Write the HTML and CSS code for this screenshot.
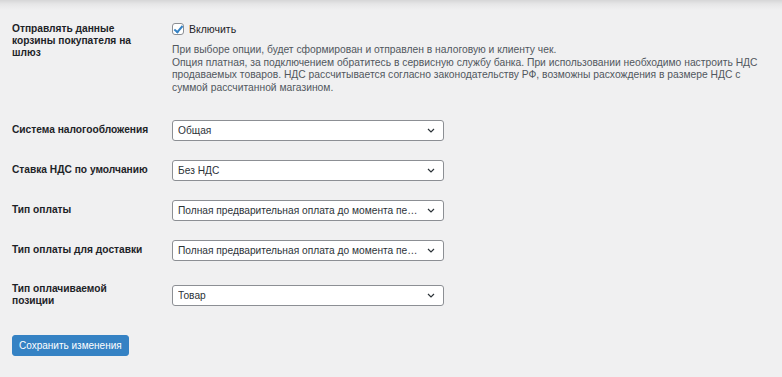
FILE: index.html
```html
<!DOCTYPE html>
<html lang="ru">
  <head>
    <meta charset="UTF-8" />
    <meta name="viewport" content="width=device-width, initial-scale=1.0" />
    <title>Настройки шлюза</title>
    <link rel="stylesheet" href="styles.css">
  </head>
  <body>
    <div class="top-shadow"></div>

    <form class="settings-form">
      <div class="form-row form-row-first">
        <div class="row-label">Отправлять данные<br />корзины покупателя на<br />шлюз</div>
        <div class="row-field">
          <label class="checkbox-label">
            <input type="checkbox" checked />
            Включить
          </label>
          <p class="description">
            При выборе опции, будет сформирован и отправлен в налоговую и клиенту чек.<br />
            Опция платная, за подключением обратитесь в сервисную службу банка. При использовании необходимо настроить НДС<br />
            продаваемых товаров. НДС рассчитывается согласно законодательству РФ, возможны расхождения в размере НДС с<br />
            суммой рассчитанной магазином.
          </p>
        </div>
      </div>

      <div class="form-row">
        <div class="row-label">Система налогообложения</div>
        <select><option>Общая</option></select>
      </div>

      <div class="form-row">
        <div class="row-label">Ставка НДС по умолчанию</div>
        <select><option>Без НДС</option></select>
      </div>

      <div class="form-row">
        <div class="row-label">Тип оплаты</div>
        <select><option>Полная предварительная оплата до момента передачи предмета расчета</option></select>
      </div>

      <div class="form-row">
        <div class="row-label">Тип оплаты для доставки</div>
        <select><option>Полная предварительная оплата до момента передачи предмета расчета</option></select>
      </div>

      <div class="form-row form-row-tall">
        <div class="row-label">Тип оплачиваемой<br />позиции</div>
        <select><option>Товар</option></select>
      </div>

      <button type="submit" class="save-btn">Сохранить изменения</button>
    </form>
  </body>
</html>
```

FILE: styles.css
```css
* {
  box-sizing: border-box;
}
html,
body {
  margin: 0;
  padding: 0;
}
body {
  background-color: #f0f0f1;
  color: #1d2327;
  font-family: "Liberation Sans", Arial, sans-serif;
  font-size: 11px;
  overflow: hidden;
}
.top-shadow {
  height: 10px;
  background: linear-gradient(#d6d6d7, #e6e6e7 40%, #f0f0f1);
}
.settings-form {
  padding: 0 12px;
}
.form-row {
  display: grid;
  grid-template-columns: 160px 272px;
  align-items: center;
  height: 40px;
}
.form-row-first {
  align-items: start;
  height: auto;
  padding: 13px 0 16px;
}
.form-row-tall {
  height: 50px;
}
.row-label {
  font-size: 10.2px;
  font-weight: bold;
  line-height: 12px;
  padding-right: 10px;
}
.checkbox-label {
  display: flex;
  align-items: center;
  gap: 5px;
  font-size: 10.5px;
  line-height: 12px;
}
.checkbox-label input {
  appearance: none;
  width: 12px;
  height: 12px;
  margin: 0;
  border: 1px solid #8c8f94;
  border-radius: 3px;
  background: #fff;
  position: relative;
}
.checkbox-label input:checked::after {
  content: "";
  position: absolute;
  left: 3px;
  top: 0px;
  width: 3px;
  height: 7px;
  border: solid #3582c4;
  border-width: 0 2px 2px 0;
  transform: rotate(40deg);
}
.description {
  margin: 9px 0 0;
  width: 610px;
  white-space: nowrap;
  color: #50575e;
  font-size: 10.3px;
  line-height: 12.6px;
}
select {
  appearance: none;
  width: 272px;
  height: 21px;
  padding: 0 22px 0 5px;
  border: 1px solid #8c8f94;
  border-radius: 3px;
  background: #fff url("data:image/svg+xml;utf8,<svg xmlns='http://www.w3.org/2000/svg' width='8' height='5' viewBox='0 0 8 5'><path d='M1 1l3 3 3-3' fill='none' stroke='%232c3338' stroke-width='1.2'/></svg>") no-repeat right 8px center;
  color: #2c3338;
  font-family: inherit;
  font-size: 10.2px;
  text-overflow: ellipsis;
  white-space: nowrap;
}
.save-btn {
  margin-top: 15px;
  height: 21px;
  padding: 0 6px;
  border: 1px solid #3582c4;
  border-radius: 3px;
  background-color: #3582c4;
  color: #fff;
  font-family: inherit;
  font-size: 10px;
  cursor: pointer;
}
```
